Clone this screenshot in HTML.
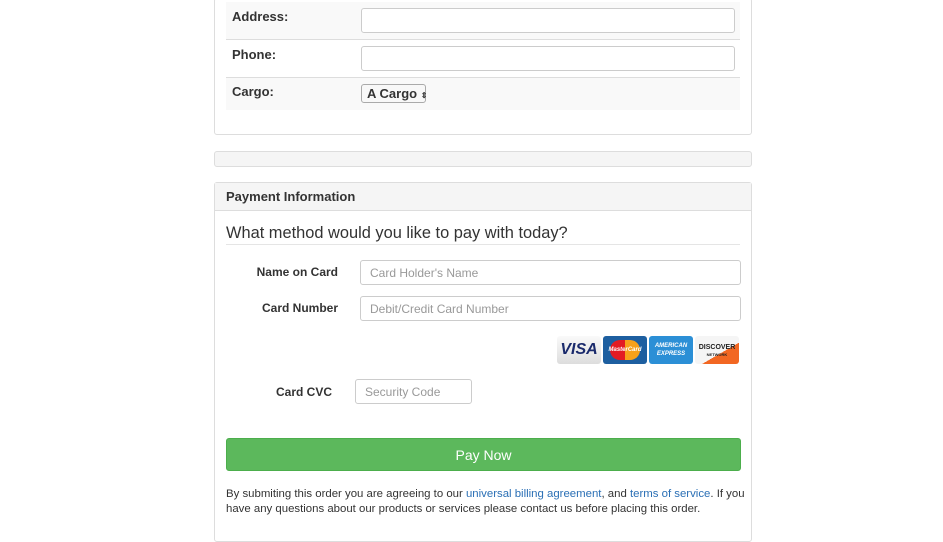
<!DOCTYPE html><html><head><style>
body{margin:0;width:943px;height:516px;background:#fff;font-family:"Liberation Sans",sans-serif;color:#333;position:relative;overflow:hidden}
.a{position:absolute}
.in{position:absolute;border:1px solid #ccc;border-radius:3px;background:#fff;box-sizing:border-box;font-size:12px;color:#999;padding-left:9px;display:flex;align-items:center}
.lb{position:absolute;font-weight:bold;font-size:13px;color:#333;white-space:nowrap}
.cd{position:absolute;top:336px;height:28px;width:44px;border-radius:3px;font-weight:bold;display:flex;align-items:center;justify-content:center;box-sizing:border-box}
a{color:#2a6fb5;text-decoration:none}
</style></head><body>
<div class="a" style="left:214px;top:-2px;width:538px;height:137px;border:1px solid #ddd;border-radius:3px;box-sizing:border-box"></div>
<div class="a" style="left:226px;top:2px;width:514px;height:37px;background:#f9f9f9;border-bottom:1px solid #ddd"></div>
<div class="a" style="left:226px;top:77px;width:514px;height:32px;background:#f9f9f9;border-top:1px solid #ddd"></div>
<div class="lb" style="left:232px;top:9px">Address:</div>
<div class="lb" style="left:232px;top:47px">Phone:</div>
<div class="lb" style="left:232px;top:84px">Cargo:</div>
<div class="in" style="left:361px;top:8px;width:374px;height:25px"></div>
<div class="in" style="left:361px;top:46px;width:374px;height:25px"></div>
<div class="a" style="left:361px;top:84px;width:65px;height:19px;border:1px solid #aaa;border-radius:3px;box-sizing:border-box;font-weight:bold;font-size:13px;color:#333;padding-left:5px;line-height:17px;background:#f8f8f8;white-space:nowrap">A Cargo <span style="font-size:8px">&#8661;</span></div>
<div class="a" style="left:214px;top:151px;width:538px;height:16px;background:#f5f5f5;border:1px solid #ddd;border-radius:3px;box-sizing:border-box"></div>
<div class="a" style="left:214px;top:182px;width:538px;height:360px;border:1px solid #ddd;border-radius:3px;box-sizing:border-box"></div>
<div class="a" style="left:215px;top:183px;width:536px;height:27px;background:#f5f5f5;border-bottom:1px solid #ddd"></div>
<div class="lb" style="left:226px;top:189px">Payment Information</div>
<div class="a" style="left:226px;top:224px;font-size:16.4px;color:#333">What method would you like to pay with today?</div>
<div class="a" style="left:226px;top:244px;width:514px;height:1px;background:#e5e5e5"></div>
<div class="lb" style="left:238px;top:265px;width:100px;text-align:right;font-size:12px">Name on Card</div>
<div class="in" style="left:360px;top:260px;width:381px;height:25px">Card Holder's Name</div>
<div class="lb" style="left:238px;top:301px;width:100px;text-align:right;font-size:12px">Card Number</div>
<div class="in" style="left:360px;top:296px;width:381px;height:25px">Debit/Credit Card Number</div>
<div class="cd" style="left:557px;background:linear-gradient(#fafafa,#ddd);color:#1a2a6c;font-size:16px;font-style:italic">VISA</div>
<div class="cd" style="left:603px;background:#1d5fa0"><div style="width:30px;height:20px;border-radius:10px;background:linear-gradient(90deg,#e31c23 50%,#f7a11a 50%);font-size:6px;color:#fff;display:flex;align-items:center;justify-content:center;font-style:italic">MasterCard</div></div>
<div class="cd" style="left:649px;background:#2b8fd6;color:#fff;font-size:6px;text-align:center;line-height:8px;font-style:italic">AMERICAN<br>EXPRESS</div>
<div class="cd" style="left:695px;background:linear-gradient(150deg,#f5f5f5 60%,#f26722 60%);color:#222;font-size:7px;text-align:center;line-height:9px;flex-direction:column">DISCOVER<span style="font-size:4px;line-height:5px">NETWORK</span></div>
<div class="lb" style="left:232px;top:385px;width:100px;text-align:right;font-size:12px">Card CVC</div>
<div class="in" style="left:355px;top:379px;width:117px;height:25px">Security Code</div>
<div class="a" style="left:226px;top:438px;width:515px;height:33px;background:#5cb85c;border:1px solid #4cae4c;box-sizing:border-box;border-radius:3px;color:#fff;font-size:14px;display:flex;align-items:center;justify-content:center">Pay Now</div>
<div class="a" style="left:226px;top:487px;width:530px;font-size:11.4px;line-height:15px;color:#333;white-space:nowrap">By submiting this order you are agreeing to our <a>universal billing agreement</a>, and <a>terms of service</a>. If you<br>have any questions about our products or services please contact us before placing this order.</div>
</body></html>
